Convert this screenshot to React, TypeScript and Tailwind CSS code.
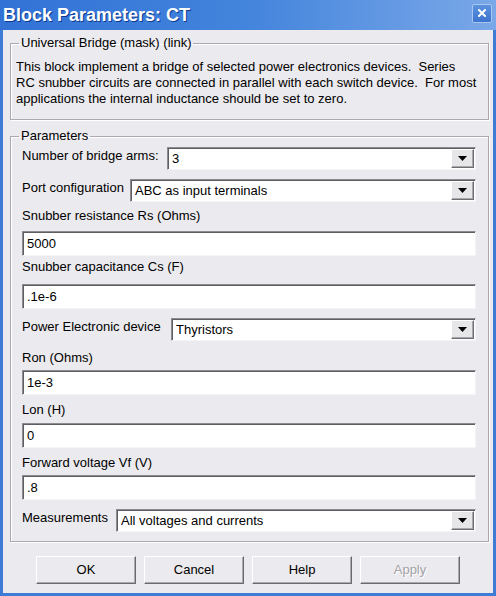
import React from "react";

const Sunken = "border border-t-[#8c8b90] border-l-[#8c8b90] border-r-[#f4f4f6] border-b-[#f4f4f6] shadow-[inset_1px_1px_0_#5e5d62] bg-white";

const TextField = ({ value, className = "" }: { value: string; className?: string }) => (
  <div className={`${Sunken} h-[25px] flex items-center pl-[4px] text-[13px] text-black ${className}`}>{value}</div>
);

const Combo = ({ value, className = "" }: { value: string; className?: string }) => (
  <div className={`${Sunken} h-[23px] flex items-center pl-[4px] pr-[1px] text-[13px] text-black ${className}`}>
    <span className="flex-1 truncate">{value}</span>
    <div className="w-[23px] h-[19px] flex items-center justify-center bg-[#e6e5e8] border border-t-white border-l-white border-r-[#6e6d72] border-b-[#6e6d72] shadow-[inset_-1px_-1px_0_#a8a7ab]">
      <svg width="9" height="5" viewBox="0 0 9 5">
        <path d="M0 0h9L4.5 5z" fill="#000" />
      </svg>
    </div>
  </div>
);

const Label = ({ children, className = "" }: { children: React.ReactNode; className?: string }) => (
  <div className={`h-[16px] leading-[16px] text-[13px] text-black whitespace-nowrap ${className}`}>{children}</div>
);

const ComboRow = ({ label, labelWidth, value, className = "" }: { label: string; labelWidth: string; value: string; className?: string }) => (
  <div className={`flex items-start ${className}`}>
    <Label className={`${labelWidth} mt-[1px]`}>{label}</Label>
    <Combo value={value} className="flex-1" />
  </div>
);

const DlgButton = ({ children, disabled = false }: { children: React.ReactNode; disabled?: boolean }) => (
  <button
    type="button"
    className={`w-[100px] h-[28px] text-[13px] bg-[#ebeaee] border border-t-white border-l-white border-r-[#6b6a6f] border-b-[#6b6a6f] shadow-[inset_-1px_-1px_0_#a9a8ad] ${
      disabled ? "text-[#a3a2a6] [text-shadow:1px_1px_0_#fff]" : "text-black"
    }`}
  >
    {children}
  </button>
);

export default function App() {
  return (
    <div className="w-[496px] h-[596px] flex flex-col bg-[#3d7bd6] font-['Liberation_Sans',Arial,sans-serif] overflow-hidden">
      {/* title bar */}
      <div className="h-[30px] flex items-center pl-[3px] pr-[4px] bg-gradient-to-r from-[#3272d6] via-[#4384dc] to-[#7aa8e8]">
        <span className="flex-1 text-[18px] font-bold text-white leading-none [text-shadow:1px_1px_0_#0b3a8e]">
          Block Parameters: CT
        </span>
        <div className="w-[20px] h-[19px] mb-[4px] flex items-center justify-center rounded-[2px] border border-[#a9c6ef] bg-gradient-to-b from-[#5d92de] to-[#3d74cf]">
          <svg width="8" height="8" viewBox="0 0 8 8">
            <path d="M1 1l6 6M7 1L1 7" stroke="#fff" strokeWidth="2" strokeLinecap="square" />
          </svg>
        </div>
      </div>

      {/* client area */}
      <div className="flex-1 flex flex-col bg-[#ebeaee] ml-[3px] mr-[3px] mb-[3px]">
        <fieldset className="mt-[5px] ml-[7px] mr-[4px] px-[5px] pb-[12px] border border-[#aba9af] shadow-[inset_1px_1px_0_#fff,1px_1px_0_#fff]">
          <legend className="ml-[3px] px-[2px] h-[16px] leading-[16px] text-[13px] text-black">Universal Bridge (mask) (link)</legend>
          <div className="mt-[8px] text-[13px] leading-[16px] text-black whitespace-pre">
            {"This block implement a bridge of selected power electronics devices.  Series\nRC snubber circuits are connected in parallel with each switch device.  For most\napplications the internal inductance should be set to zero."}
          </div>
        </fieldset>

        <fieldset className="mt-[8px] ml-[7px] mr-[4px] pl-[11px] pr-[12px] pb-[9px] border border-[#aba9af] shadow-[inset_1px_1px_0_#fff,1px_1px_0_#fff]">
          <legend className="-ml-[3px] px-[2px] h-[16px] leading-[16px] text-[13px] text-black">Parameters</legend>
          <div className="flex flex-col">
            <ComboRow className="mt-[3px]" label="Number of bridge arms:" labelWidth="w-[145px]" value="3" />
            <ComboRow className="mt-[9px]" label="Port configuration" labelWidth="w-[108px]" value="ABC as input terminals" />
            <Label className="mt-[6px]">Snubber resistance Rs (Ohms)</Label>
            <TextField className="mt-[7px]" value="5000" />
            <Label className="mt-[3px]">Snubber capacitance Cs (F)</Label>
            <TextField className="mt-[9px]" value=".1e-6" />
            <ComboRow className="mt-[9px]" label="Power Electronic device" labelWidth="w-[149px]" value="Thyristors" />
            <Label className="mt-[9px]">Ron (Ohms)</Label>
            <TextField className="mt-[4px]" value="1e-3" />
            <Label className="mt-[7px]">Lon (H)</Label>
            <TextField className="mt-[5px]" value="0" />
            <Label className="mt-[7px]">Forward voltage Vf (V)</Label>
            <TextField className="mt-[4px]" value=".8" />
            <ComboRow className="mt-[9px]" label="Measurements" labelWidth="w-[94px]" value="All voltages and currents" />
          </div>
        </fieldset>

        <div className="mt-[14px] flex justify-center gap-[8px]">
          <DlgButton>OK</DlgButton>
          <DlgButton>Cancel</DlgButton>
          <DlgButton>Help</DlgButton>
          <DlgButton disabled>Apply</DlgButton>
        </div>
      </div>
    </div>
  );
}
